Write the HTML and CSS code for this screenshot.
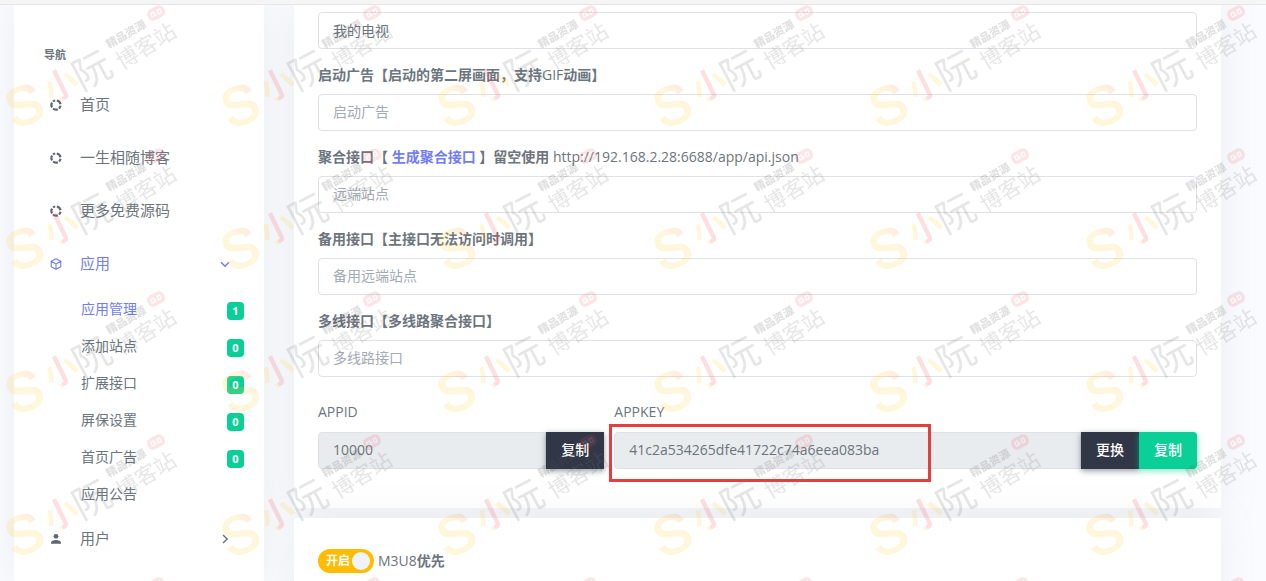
FILE: index.html
```html
<!DOCTYPE html>
<html lang="zh-CN">
<head>
<meta charset="utf-8">
<meta name="viewport" content="width=device-width, initial-scale=1">
<title>应用管理</title>
<link rel="stylesheet" href="styles.css">
</head>
<body>
<svg class="sprite" aria-hidden="true">
  <symbol id="ring" viewBox="0 0 12 12">
    <g fill="none" stroke="currentColor" stroke-width="2.2">
      <path d="M6.800 1.500A4.600 4.600 0 0 1 10.500 5.200M10.500 6.800A4.600 4.600 0 0 1 9 9.500M7.800 10.200A4.600 4.600 0 0 1 3 9.500M2.100 8.400A4.600 4.600 0 0 1 2.100 3.600M3 2.500A4.600 4.600 0 0 1 5.200 1.500"/>
    </g>
  </symbol>
</svg>
<div class="topbar"></div>
<div class="layout">
  <nav class="sidebar">
    <h2 class="nav-title">导航</h2>
    <a class="nav-item" href="#"><svg class="icon"><use href="#ring"/></svg><span class="nav-text">首页</span></a>
    <a class="nav-item" href="#"><svg class="icon"><use href="#ring"/></svg><span class="nav-text">一生相随博客</span></a>
    <a class="nav-item" href="#"><svg class="icon"><use href="#ring"/></svg><span class="nav-text">更多免费源码</span></a>
    <a class="nav-item active" href="#"><svg class="icon" viewBox="0 0 12 12"><path d="M6 .7 10.800 3.300V8.700L6 11.300 1.200 8.700V3.300ZM1.200 3.300 6 6 10.800 3.300M6 6V11.300" fill="none" stroke="currentColor" stroke-width="1.1" stroke-linejoin="round"/></svg><span class="nav-text">应用</span><svg class="arrow" viewBox="0 0 10 10"><path d="M1 3.200 5 7.200 9 3.200" fill="none" stroke="currentColor" stroke-width="1.500"/></svg></a>
    <div class="subnav">
      <a class="sub-item active" href="#">应用管理<span class="badge">1</span></a>
      <a class="sub-item" href="#">添加站点<span class="badge">0</span></a>
      <a class="sub-item" href="#">扩展接口<span class="badge">0</span></a>
      <a class="sub-item" href="#">屏保设置<span class="badge">0</span></a>
      <a class="sub-item" href="#">首页广告<span class="badge">0</span></a>
      <a class="sub-item" href="#">应用公告</a>
    </div>
    <a class="nav-item" href="#"><svg class="icon" viewBox="0 0 12 12"><circle cx="6" cy="3.300" r="2.400" fill="currentColor"/><path d="M1 10.800V9.600C1 7.900 3.600 6.900 6 6.900S11 7.900 11 9.600V10.800Z" fill="currentColor"/></svg><span class="nav-text">用户</span><svg class="arrow" viewBox="0 0 10 10"><path d="M3 1 7.200 5 3 9" fill="none" stroke="currentColor" stroke-width="1.500"/></svg></a>
  </nav>

  <main class="content">
    <section class="card">
      <div class="field">
        <input class="control" type="text" value="我的电视" aria-label="应用名称">
      </div>
      <div class="field">
        <label for="splash">启动广告【启动的第二屏画面，支持<span class="latin">GIF</span>动画】</label>
        <input class="control" id="splash" type="text" placeholder="启动广告">
      </div>
      <div class="field">
        <label for="remote">聚合接口【 <a href="#">生成聚合接口</a> 】留空使用 <span class="latin">http://192.168.2.28:6688/app/api.json</span></label>
        <input class="control" id="remote" type="text" placeholder="远端站点">
      </div>
      <div class="field">
        <label for="backup">备用接口【主接口无法访问时调用】</label>
        <input class="control" id="backup" type="text" placeholder="备用远端站点">
      </div>
      <div class="field">
        <label for="multi">多线接口【多线路聚合接口】</label>
        <input class="control" id="multi" type="text" placeholder="多线路接口">
      </div>
      <div class="keys">
        <div class="key-id">
          <label for="appid"><span class="latin">APPID</span></label>
          <div class="group">
            <input class="control" id="appid" type="text" value="10000" readonly>
            <button class="btn dark" type="button">复制</button>
          </div>
        </div>
        <div class="key-secret">
          <label for="appkey"><span class="latin">APPKEY</span></label>
          <div class="group">
            <input class="control" id="appkey" type="text" value="41c2a534265dfe41722c74a6eea083ba" readonly>
            <button class="btn dark" type="button">更换</button>
            <button class="btn green" type="button">复制</button>
            <span class="highlight"></span>
          </div>
        </div>
      </div>
    </section>
    <section class="card options">
      <div class="switch">
        <input id="m3u8" type="checkbox" checked>
        <span class="switch-text">开启</span>
      </div>
      <label for="m3u8"><span class="latin">M3U8</span>优先</label>
    </section>
  </main>
</div>

<svg class="watermark" aria-hidden="true">
  <defs>
    <linearGradient id="gold" x1="0" y1="1" x2="1" y2="0">
      <stop offset="0.6" stop-color="#ffcf40"/><stop offset="0.85" stop-color="#ff8a5c"/>
    </linearGradient>
    <linearGradient id="mix">
      <stop offset="0.36" stop-color="#ffcf40"/><stop offset="0.36" stop-color="#f0505f"/>
      <stop offset="0.64" stop-color="#f0505f"/><stop offset="0.64" stop-color="#ffcf40"/>
    </linearGradient>
    <pattern id="mark" width="216" height="143" patternUnits="userSpaceOnUse">
      <g text-anchor="middle">
        <text class="mark-s" transform="translate(24 105) rotate(-20)" y="19">S</text>
        <text class="mark-xiao" transform="translate(61 85) rotate(-26)" y="12">小</text>
        <text class="mark-ruan" transform="translate(92 70) rotate(-28)" y="14">阮</text>
        <text class="mark-blog" transform="translate(146 46) rotate(-32)" y="8">博客站</text>
        <text class="mark-tag" transform="translate(126 34) rotate(-30)" y="4">精品资源</text>
      </g>
      <g transform="translate(156 13) rotate(-27)" fill="none" opacity="0.8">
        <rect x="-9" y="-6" width="18" height="12" rx="5" fill="#ec4a5c"/>
        <path d="M-1 -2H-5V2H-1V0H-3M2 -2H5V2H2Z" stroke="#fff" stroke-width="1.300"/>
      </g>
    </pattern>
  </defs>
  <rect width="100%" height="100%" fill="url(#mark)"/>
</svg>
</body>
</html>
```
FILE: styles.css
```css
* { box-sizing: border-box; }

body {
  margin: 0;
  height: 100vh;
  overflow: hidden;
  display: flex;
  flex-direction: column;
  background: #fafbfe;
  color: #6c757d;
  font-family: "Open Sans", "Noto Sans CJK SC", sans-serif;
  font-size: 14px;
  line-height: 21px;
}

a { color: #727cf5; text-decoration: none; }

.sprite { position: absolute; width: 0; height: 0; }

.topbar {
  flex: none;
  height: 5px;
  background: #f5f5f5;
  border-bottom: 1px solid #e6e6e6;
}

.layout {
  flex: 1;
  min-height: 0;
  display: flex;
  padding: 0 45px 0 14px;
  overflow: hidden;
}

.sidebar {
  flex: none;
  width: 250px;
  padding-top: 40px;
  background: #fff;
  box-shadow: 0 0 35px rgba(154, 161, 171, 0.15);
}

.nav-title {
  margin: 0 0 13px 30px;
  font-size: 11px;
  font-weight: 700;
  line-height: 20px;
}

.nav-item {
  display: flex;
  align-items: center;
  height: 53px;
  padding: 0 34px 0 36px;
  color: #6c757d;
  font-size: 15px;
}

.icon { width: 12px; height: 12px; margin-right: 18px; color: #5f6770; }
.nav-text { flex: 1; }
.arrow { width: 10px; height: 10px; }
.active, .active .icon { color: #727cf5; }

.sub-item {
  display: flex;
  align-items: center;
  justify-content: space-between;
  height: 37px;
  padding: 0 20px 0 67px;
  color: #6c757d;
}
.sub-item.active { color: #727cf5; }

.badge {
  min-width: 17px;
  margin-top: 4px;
  border-radius: 4px;
  background: #0acf97;
  color: #fff;
  font-size: 11px;
  font-weight: 700;
  line-height: 18px;
  text-align: center;
}

.content {
  flex: 1;
  min-width: 0;
  display: flex;
  flex-direction: column;
  gap: 10px;
  margin-left: 30px;
}

.card {
  padding: 7px 24px 39px;
  background: #fff;
  box-shadow: 0 0 35px rgba(154, 161, 171, 0.15);
}

.field { margin-bottom: 16px; }

label { display: block; margin-bottom: 9px; font-weight: 700; }
.field label { line-height: 20px; }
.latin { font-weight: 400; }

.control {
  display: block;
  width: 100%;
  height: 37px;
  padding: 0 14px 2px;
  border: 1px solid #dee2e6;
  border-radius: 4px;
  background: #fff;
  color: #6c757d;
  font: inherit;
}
.control::placeholder { color: #a3abb4; opacity: 1; }
.control[readonly] { background: #e9ecef; }

.keys {
  display: grid;
  grid-template-columns: repeat(12, 1fr);
  column-gap: 10px;
  margin-top: 24px;
}
.key-id { grid-column: span 4; }
.key-secret { grid-column: span 8; }
.keys label { margin-bottom: 10px; }

.group { position: relative; display: flex; }
.group .control { flex: 1; min-width: 0; border-radius: 4px 0 0 4px; }

.btn {
  height: 37px;
  padding: 0 15px 2px;
  border: 0;
  color: #fff;
  font: inherit;
  font-weight: 500;
}
.dark { background: #313747; box-shadow: 0 2px 6px rgba(49, 58, 70, 0.5); }
.green { border-radius: 0 4px 4px 0; background: #0acf97; box-shadow: 0 2px 6px rgba(10, 207, 151, 0.5); }

.highlight {
  position: absolute;
  top: -8px;
  left: -5px;
  width: 322px;
  height: 58px;
  border: 3px solid #e53e3e;
  pointer-events: none;
}

.options {
  flex: 1;
  display: flex;
  align-items: flex-start;
  gap: 4px;
  padding-top: 31px;
}
.options label { margin: 0; line-height: 24px; }

.switch { display: grid; }
.switch input {
  grid-area: 1 / 1;
  display: flex;
  align-items: center;
  justify-content: flex-end;
  width: 56px;
  height: 24px;
  margin: 0;
  padding: 0 4px;
  border-radius: 12px;
  background: #ffbc00;
  appearance: none;
}
.switch input::after {
  content: "";
  width: 18px;
  height: 18px;
  border-radius: 50%;
  background: #f1f3fa;
}
.switch-text {
  grid-area: 1 / 1;
  padding-left: 8px;
  color: #fff;
  font-size: 12px;
  font-weight: 700;
  line-height: 24px;
  pointer-events: none;
}

.watermark {
  position: fixed;
  inset: 0;
  width: 100%;
  height: 100%;
  opacity: 0.18;
  pointer-events: none;
  font-family: "Noto Sans CJK SC", sans-serif;
}
.mark-s {
  font: 400 54px "Liberation Sans", sans-serif;
  fill: url(#gold);
  stroke: url(#gold);
  stroke-width: 2px;
  stroke-linejoin: round;
}
.mark-xiao { font-size: 34px; font-weight: 700; fill: url(#mix); }
.mark-ruan { font-size: 38px; font-weight: 400; fill: #777; }
.mark-blog { font-size: 22px; fill: #777; }
.mark-tag { font-size: 11px; font-weight: 900; fill: #555; }
```
